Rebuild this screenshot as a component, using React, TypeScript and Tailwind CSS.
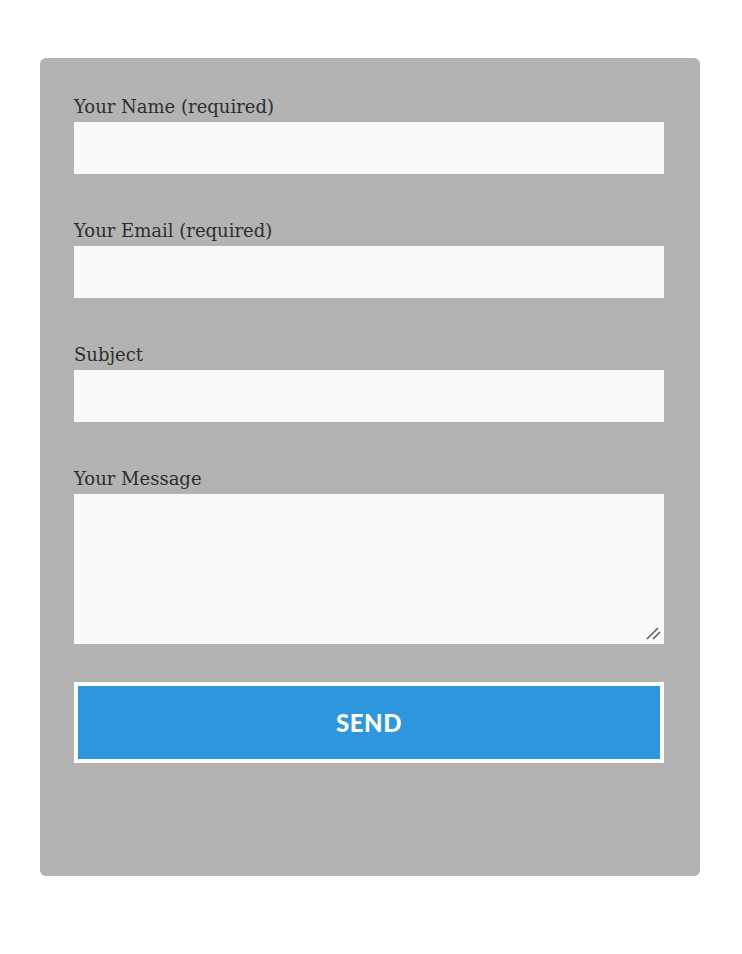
import React from "react";

const labelCls =
  "block text-[18px] leading-[18px] mb-[6px] text-[#2e2e2e] [font-family:'DejaVu_Serif',serif]";
const inputCls = "block w-full h-[52px] bg-[#fafafa] border-0 outline-none";

export default function App() {
  return (
    <div className="min-h-[954px] w-[742px] bg-white pt-[58px] pl-[40px]">
      <div className="w-[660px] h-[818px] rounded-[6px] bg-[#b3b3b3] pt-[40px] pl-[34px] pr-[36px]">
        <div className="flex flex-col gap-[48px]">
          <div>
            <label className={labelCls}>Your Name (required)</label>
            <input className={inputCls} />
          </div>
          <div>
            <label className={labelCls}>Your Email (required)</label>
            <input className={inputCls} />
          </div>
          <div>
            <label className={labelCls}>Subject</label>
            <input className={inputCls} />
          </div>
          <div>
            <label className={labelCls}>Your Message</label>
            <div className="relative">
              <textarea className="block w-full h-[150px] bg-[#fafafa] border-0 outline-none resize-none" />
              <svg
                className="absolute right-[3px] bottom-[4px]"
                width="15"
                height="13"
                viewBox="0 0 15 13"
              >
                <line x1="1" y1="12" x2="12" y2="1" stroke="#555" strokeWidth="1.4" />
                <line x1="7" y1="12" x2="14" y2="5" stroke="#555" strokeWidth="1.4" />
              </svg>
            </div>
          </div>
        </div>
        <button className="mt-[38px] block w-full h-[81px] bg-[#2d96dd] border-4 border-white text-white text-[24px] font-black tracking-[0.5px] [font-family:Lato,sans-serif]">
          SEND
        </button>
      </div>
    </div>
  );
}
